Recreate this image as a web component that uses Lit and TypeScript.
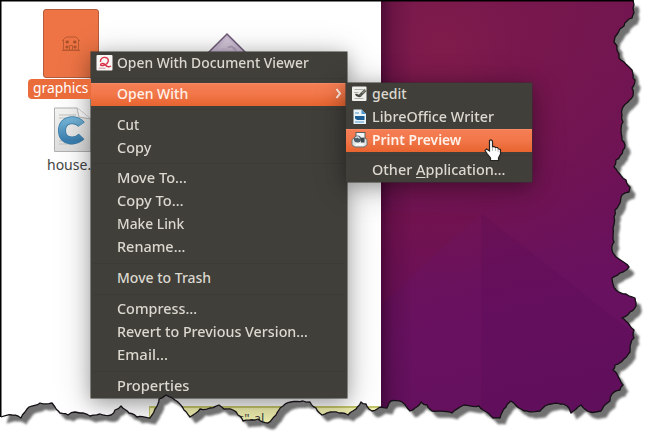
import { LitElement, html, css, svg } from "lit";
import { customElement, property } from "lit/decorators.js";

const RIGHT: number[][] = [[633,0],[634,5],[633,8],[634,13],[632,18],[627,21],[624,26],[620,29],[618,33],[615,37],[614,42],[617,46],[619,54],[619,58],[624,62],[629,67],[632,70],[633,78],[635,80],[632,88],[633,96],[628,102],[623,107],[622,115],[623,122],[621,130],[622,140],[625,145],[623,150],[620,156],[616,160],[614,167],[619,173],[626,180],[630,187],[629,192],[622,195],[620,203],[615,210],[614,217],[613,228],[614,242],[612,250],[616,257],[622,261],[629,267],[620,273],[612,278],[613,284],[616,290],[626,294],[635,298],[636,306],[630,312],[622,318],[628,323],[634,330],[634,338],[631,343],[630,352],[624,359],[615,365],[613,370],[617,374],[620,380],[623,385],[620,390],[612,394],[610,401],[606,404],[601,411]];
const BOTTOM: number[][] = [[590,412],[581,405],[578,407],[571,413],[567,406],[560,404],[551,404],[545,406],[540,411],[527,411],[521,409],[511,401],[506,407],[500,418],[493,418],[488,413],[479,406],[464,405],[460,407],[452,413],[432,411],[427,405],[421,402],[415,408],[410,411],[402,402],[391,401],[387,408],[380,407],[372,411],[366,404],[361,402],[356,409],[348,415],[339,413],[330,412],[322,415],[316,408],[310,402],[303,401],[291,402],[283,406],[276,415],[268,423],[258,419],[243,421],[238,415],[233,410],[224,409],[219,405],[210,408],[200,409],[190,417],[184,410],[175,400],[166,395],[159,399],[155,409],[150,418],[137,417],[129,413],[121,406],[115,410],[111,415],[100,414],[90,416],[80,413],[75,412],[68,415],[60,413],[55,407],[52,403],[40,403],[29,407],[25,412],[21,418],[12,415],[1,417]];

// Splits each segment of the tear into short steps with a small fixed wobble.
function roughen(points: number[][]): string {
  const out: string[] = [];
  let k = 0;
  points.forEach(([x, y], i) => {
    out.push(`${x} ${y}`);
    const next = points[i + 1];
    if (!next) return;
    const dx = next[0] - x, dy = next[1] - y;
    const len = Math.hypot(dx, dy);
    const n = Math.floor(len / 2.6);
    for (let j = 1; j < n; j++) {
      k++;
      const w = Math.sin(k * 12.9898) * 0.9;
      out.push(`${(x + (dx * j) / n - (dy / len) * w).toFixed(1)} ${(y + (dy * j) / n + (dx / len) * w).toFixed(1)}`);
    }
  });
  return out.join(" L");
}
const EDGE = roughen([...RIGHT, ...BOTTOM]);

const icons: Record<string, unknown> = {
  viewer: svg`<rect x="0" y="0" width="16" height="15.500" rx="1" fill="#faf6f4"/><path d="M4 7C3.500 3.500 6.500 2 9 2.500 12.500 3 12.500 6.500 10.500 8.500 8 11 5 11 4 10 4 8 7 8 8.500 9.500 10 11.500 12 12.500 14.500 11" fill="none" stroke="#d8344a" stroke-width="1.400"/><path d="M2 13.200H9" stroke="#d09aa0"/>`,
  gedit: svg`<rect x="0.500" y="0.500" width="14.500" height="14.500" rx="1" fill="#efefeb"/><path d="M3 3.500H12M2.500 6.500H7M3 12.500H12" stroke="#b0b0ac"/><path d="M4 9C6 8 7 11.500 9 9.500" fill="none" stroke="#45483f" stroke-width="2.400"/><path d="M8.500 9.500 14 4" stroke="#55594f" stroke-width="3"/><path d="M10.500 7 15 3.500" stroke="#9aa08e"/>`,
  writer: svg`<path d="M2 0.500H10L14.500 5V15H2Z" fill="#e8f3fa"/><path d="M10 .5 14.500 5H10Z" fill="#4a95cb"/><path d="M3.500 4H7.500M3.500 13H12.500" stroke="#85b6d8" stroke-width="1.300"/><path d="M3.500 7H13V11H5.500L3.500 9.500Z" fill="#1a5c94"/>`,
  print: svg`<rect x="4.500" y=".5" width="9" height="7" fill="#f2f5f5" stroke="#59605f"/><path d="M.5 7.500 3 6H13L15.500 7.500V13L12.500 15H3.500L.5 13Z" fill="#e0e3e3" stroke="#6f7573"/><circle cx="6" cy="7" r="3.600" fill="#4b5c66"/><path d="M4 6Q6 3.500 8 6.500" fill="none" stroke="#e4eef2" stroke-width="1.300"/><path d="M4 12.500H12" stroke="#fff" stroke-width="2"/><rect x="9.500" y="6" width="3.500" height="4.500" fill="#3c464b"/>`,
};

interface Item { label?: string; icon?: string; active?: boolean; arrow?: boolean; bold?: boolean; w?: number; mnemonic?: string; rest?: string; }

@customElement("menu-panel")
export class MenuPanel extends LitElement {
  @property({ attribute: false }) items: (Item | null)[] = [];
  static styles = css`
    :host { display: flex; flex-direction: column; background: #403f3a; color: #dcd8cf; box-shadow: 0 0 0 .5px #35342f, 0 4px 18px rgba(0,0,0,.3), 0 6px 36px rgba(0,0,0,.2); font: 500 14px/22px "Noto Sans", sans-serif; }
    .sep { height: 8px; display: flex; align-items: center; padding: 0 2px; }
    .sep::before { content: ""; flex: 1; border-top: 1px solid #3c3b36; }
    .row { height: 23px; display: flex; align-items: center; padding: 0 5px 1px; gap: 4px; box-sizing: border-box; white-space: nowrap; }
    .active { background: linear-gradient(#f67e55, #f2784b 45%, #e8642f); color: #fff1e9; box-shadow: inset 0 1px #f88b65; }
    .bold { font-weight: 600; }
    .icon { width: 17px; height: 16px; flex: none; }
    .spacer { flex: 1; }
    .chev { width: 7px; height: 11px; }
    u { text-decoration-thickness: 1px; text-underline-offset: 2px; }
    .label { transform-origin: 0 50%; }
  `;
  updated() {
    this.renderRoot.querySelectorAll<HTMLElement>(".label").forEach((el) => {
      const w = Number(el.dataset.w);
      if (w) el.style.transform = `scaleX(${w / el.offsetWidth})`;
    });
  }
  render() {
    return this.items.map((it) => it === null ? html`<div class="sep"></div>` : html`
      <div class="row ${it.active ? "active" : ""} ${it.bold ? "bold" : ""}">
        <svg class="icon" viewBox="0 0 16 16">${it.icon ? icons[it.icon] : ""}</svg>
        <span class="label" data-w=${it.w ?? 0}>${it.label}${it.mnemonic ? html`<u>${it.mnemonic}</u>${it.rest}` : ""}</span>
        <span class="spacer"></span>
        ${it.arrow ? html`<svg class="chev" viewBox="0 0 7 11"><path d="M1.500 1 5 5.500 1.500 10" fill="none" stroke="#fff0e5" stroke-width="2"/></svg>` : ""}
      </div>`);
  }
}

@customElement("app-root")
export class AppRoot extends LitElement {
  static styles = css`
    :host { display: block; position: relative; width: 658px; height: 443px; overflow: hidden; background: #fff; font-family: "Noto Sans", sans-serif; }
    .layer { position: absolute; inset: 0; width: 658px; height: 443px; }
    .scene { position: absolute; inset: 0; display: grid; grid-template-columns: 381px 1fr; }
    .files { background: #fff; }
    .wall { background: linear-gradient(90deg, rgba(35,0,30,.5), rgba(35,0,30,.16) 12px, transparent 32px), radial-gradient(circle at 60px 45px, #7f1c4b 0, rgba(122,24,75,.7) 80px, transparent 230px), linear-gradient(168deg, #73174f, #6d1256 45%, #681160 68%, #62105c); }
    .item { position: absolute; }
    .sheet { left: 43px; top: 9px; width: 56px; height: 69px; box-sizing: border-box; background: #ee7445; border: 1px solid #b45b3b; border-radius: 3px; display: grid; place-items: center; }
    .name { left: 28px; top: 79px; width: 88px; height: 20px; box-sizing: border-box; padding-left: 5px; background: #eb6c3b; border-radius: 4px; color: #fff; font-size: 13.8px; line-height: 18px; }
    .house { left: 47px; top: 155px; font-size: 14px; line-height: 20px; color: #444; }
    .note { left: 149px; top: 406px; width: 230px; height: 30px; box-sizing: border-box; border: 1px solid #c3c66a; border-top-width: 2px; background: #f0f0b0; font-size: 13px; line-height: 20px; color: #444; padding-left: 88px; }
    .main { left: 91px; top: 52px; width: 256px; height: 346px; }
    .sub { left: 346px; top: 83px; width: 186px; height: 99px; }
  `;
  main: (Item | null)[] = [
    { label: "Open With Document Viewer", icon: "viewer", w: 192 }, null,
    { label: "Open With", active: true, arrow: true, w: 71 }, null,
    { label: "Cut", w: 22 }, { label: "Copy", w: 34 }, null,
    { label: "Move To…", w: 70 }, { label: "Copy To…", w: 67 }, { label: "Make Link", w: 67 }, { label: "Rename…", w: 68 }, null,
    { label: "Move to Trash", w: 94 }, null,
    { label: "Compress…", w: 80 }, { label: "Revert to Previous Version…", w: 191 }, { label: "Email…", w: 51 }, null,
    { label: "Properties", w: 72 },
  ];
  sub: (Item | null)[] = [
    { label: "gedit", icon: "gedit", w: 35 },
    { label: "LibreOffice Writer", icon: "writer", w: 122 },
    { label: "Print Preview", icon: "print", active: true, bold: true, w: 89 }, null,
    { label: "Other ", mnemonic: "A", rest: "pplication…", w: 134 },
  ];
  render() {
    return html`
      <svg class="layer" viewBox="0 0 658 443">
        <defs>
          <filter id="soft"><feGaussianBlur stdDeviation="1.3"/></filter>
        </defs>
        <path d="M12 380 L600 0 L${EDGE}Z" transform="translate(5.500 6.500)" fill="#6f716f" filter="url(#soft)"/>
      </svg>
      <div class="scene" style="clip-path: path('M0 0 L${EDGE} L0 417Z')">
        <div class="files"></div>
        <div class="wall"></div>
        <svg class="layer" viewBox="0 0 658 443">
          <path d="M481 213 381 305V211Z" fill="#7a1238" opacity=".13"/>
          <path d="M481 213 640 338V443H481Z" fill="#4c0852" opacity=".12"/>
          <path d="M481 0V443" stroke="#821c5b" opacity=".12"/>
          <path d="M481 213 640 130" stroke="#821c5b" opacity=".12"/>
        </svg>
        <div class="item sheet">
          <svg width="20" height="17" viewBox="0 0 20 17" fill="none" stroke="#b9592f" stroke-width="1"><path d="M1 6 5 2H15L19 6M2.500 5V15H17.500V5M1 15.500H19M8.500 15V10.500H11.500V15"/><path d="M5 6H7.500V8H5ZM12.500 6H15V8H12.500ZM5 11H7V13H5ZM13 11H15V13H13Z" fill="#8c4028"/></svg>
        </div>
        <svg class="item" style="left:54px;top:107px" width="38" height="46" viewBox="0 0 38 46">
          <defs>
            <linearGradient id="paper" x2="0" y2="1"><stop stop-color="#f4f4f3"/><stop offset="1" stop-color="#dcdddc"/></linearGradient>
            <linearGradient id="blue" x2="0" y2="1"><stop stop-color="#72b2d6"/><stop offset="1" stop-color="#3b7faf"/></linearGradient>
          </defs>
          <path d="M.5 1H23L37 12V44.500H.5Z" fill="url(#paper)" stroke="#b0b1b0"/>
          <path d="M23 1 25 10 37 12" fill="#fff" stroke="#bbb"/>
          <path d="M5 8H22M5 11H26M5 34H25M5 37H20" stroke="#c0c0c0"/>
          <path d="M27.500 17.500C23 11 8 11 8 23.500S22 35 27.500 29.500" fill="none" stroke="#397ba7" stroke-width="8"/>
          <path d="M27.500 17.500C23 11 8 11 8 23.500S22 35 27.500 29.500" fill="none" stroke="url(#blue)" stroke-width="6.500"/>
        </svg>
        <div class="item house">house.</div>
        <svg class="item" style="left:206px;top:32px" width="42" height="42" viewBox="0 0 42 42"><path d="M21 2 40 21 21 40 2 21Z" fill="#c7b8d0" stroke="#6e5b76" stroke-width="1.500"/><path d="M21 5 30 15 24 18 18 16 12 17Z" fill="#d0c3d6"/><path d="M22 16Q26 12 30 19" fill="none" stroke="#b0a0bb" stroke-width="2"/></svg>
        <div class="item note">s"-al</div>
        <menu-panel class="item main" .items=${this.main}></menu-panel>
        <menu-panel class="item sub" .items=${this.sub}></menu-panel>
        <div class="item name" style="width:63px;border-radius:4px 0 0 4px">graphics</div>
        <svg class="item" style="left:484px;top:138px" width="18" height="24" viewBox="0 0 18 24">
          <path d="M5.500 2.500C7.500 1 8.500 3 8.500 4V9L10 8.500 11.500 9.500 13.500 9.500 14.500 11 16.500 11.500V16L14.500 20V22.500H6.500V20L3 15.500 1 12.500 2.500 11 5.500 13Z" fill="#fff" stroke="#272321" stroke-width="1.200"/>
          <path d="M8.500 9V13M11.500 10V13M14 11V14" stroke="#aaa" stroke-width=".8"/>
        </svg>
      </div>
      <svg class="layer" viewBox="0 0 658 443" fill="none" stroke="#151015">
        <path d="M${EDGE}" stroke-width="1.300" stroke-linejoin="round"/>
        <path d="M.7 417V.8H633.500" stroke="#000" stroke-width="1.600"/>
      </svg>`;
  }
}
